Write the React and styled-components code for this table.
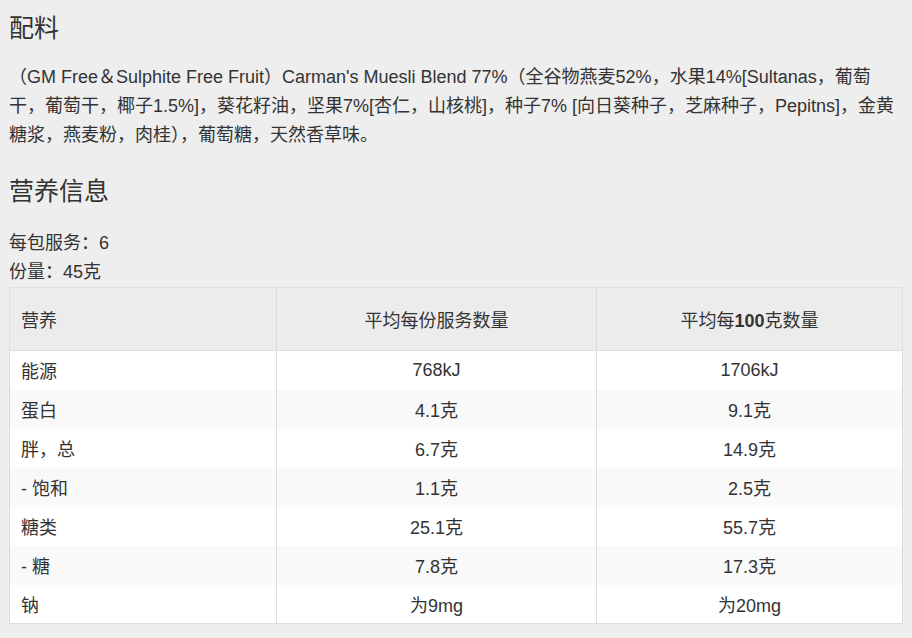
import React from "react";
import styled, { createGlobalStyle } from "styled-components";

const Global = createGlobalStyle`
  html, body { margin: 0; padding: 0; background: #eeeeee; }
  body {
    font-family: "Liberation Sans", Arial, "Noto Sans CJK SC", sans-serif;
    color: #333333;
  }
`;

const Page = styled.div`
  padding: 15px 10px 0 9px;
  box-sizing: border-box;
  width: 912px;
`;

const Title = styled.h3`
  margin: ${(p) => p.$top || 0}px 0 0;
  font-size: 25px;
  line-height: 26px;
  font-weight: 400;
  color: #333;
`;

const Para = styled.p`
  margin: 22px 0 0;
  font-size: 18px;
  line-height: 29px;
  color: #333;
`;

const Info = styled.div`
  margin-top: 25px;
  font-size: 18px;
  line-height: 29px;
  color: #333;
`;

const Table = styled.table`
  width: 893px;
  border-collapse: collapse;
  border: 1px solid #dddddd;
  font-size: 18px;
  color: #333;
  table-layout: fixed;
`;

const Th = styled.th`
  height: 62px;
  padding: 0 11px;
  background: #ececec;
  font-weight: 400;
  text-align: ${(p) => (p.$center ? "center" : "left")};
  border-left: 1px solid #dddddd;
  border-bottom: 1px solid #dddddd;
  &:first-child { border-left: none; }
`;

const Tr = styled.tr`
  background: ${(p) => (p.$odd ? "#f9f9f9" : "#ffffff")};
`;

const Td = styled.td`
  height: 39px;
  padding: 0 11px;
  box-sizing: border-box;
  text-align: ${(p) => (p.$center ? "center" : "left")};
  border-left: 1px solid #dddddd;
  &:first-child { border-left: none; }
`;

const Bold = styled.b`
  font-weight: 700;
`;

const rows = [
  ["能源", "768kJ", "1706kJ"],
  ["蛋白", "4.1克", "9.1克"],
  ["胖，总", "6.7克", "14.9克"],
  ["- 饱和", "1.1克", "2.5克"],
  ["糖类", "25.1克", "55.7克"],
  ["- 糖", "7.8克", "17.3克"],
  ["钠", "为9mg", "为20mg"],
];

export default function App() {
  return (
    <>
      <Global />
      <Page>
        <Title>配料</Title>
        <Para>
          （GM Free＆Sulphite Free Fruit）Carman's Muesli Blend 77%（全谷物燕麦52%，水果14%[Sultanas，葡萄干，葡萄干，椰子1.5%]，葵花籽油，坚果7%[杏仁，山核桃]，种子7% [向日葵种子，芝麻种子，Pepitns]，金黄糖浆，燕麦粉，肉桂），葡萄糖，天然香草味。
        </Para>
        <Title $top={28}>营养信息</Title>
        <Info>
          <div>每包服务：6</div>
          <div>份量：45克</div>
        </Info>
        <Table>
          <colgroup>
            <col style={{ width: 267 }} />
            <col style={{ width: 320 }} />
            <col style={{ width: 306 }} />
          </colgroup>
          <thead>
            <tr>
              <Th>营养</Th>
              <Th $center>平均每份服务数量</Th>
              <Th $center>
                平均每<Bold>100</Bold>克数量
              </Th>
            </tr>
          </thead>
          <tbody>
            {rows.map((r, i) => (
              <Tr key={i} $odd={i % 2 === 1}>
                <Td>{r[0]}</Td>
                <Td $center>{r[1]}</Td>
                <Td $center>{r[2]}</Td>
              </Tr>
            ))}
          </tbody>
        </Table>
      </Page>
    </>
  );
}
